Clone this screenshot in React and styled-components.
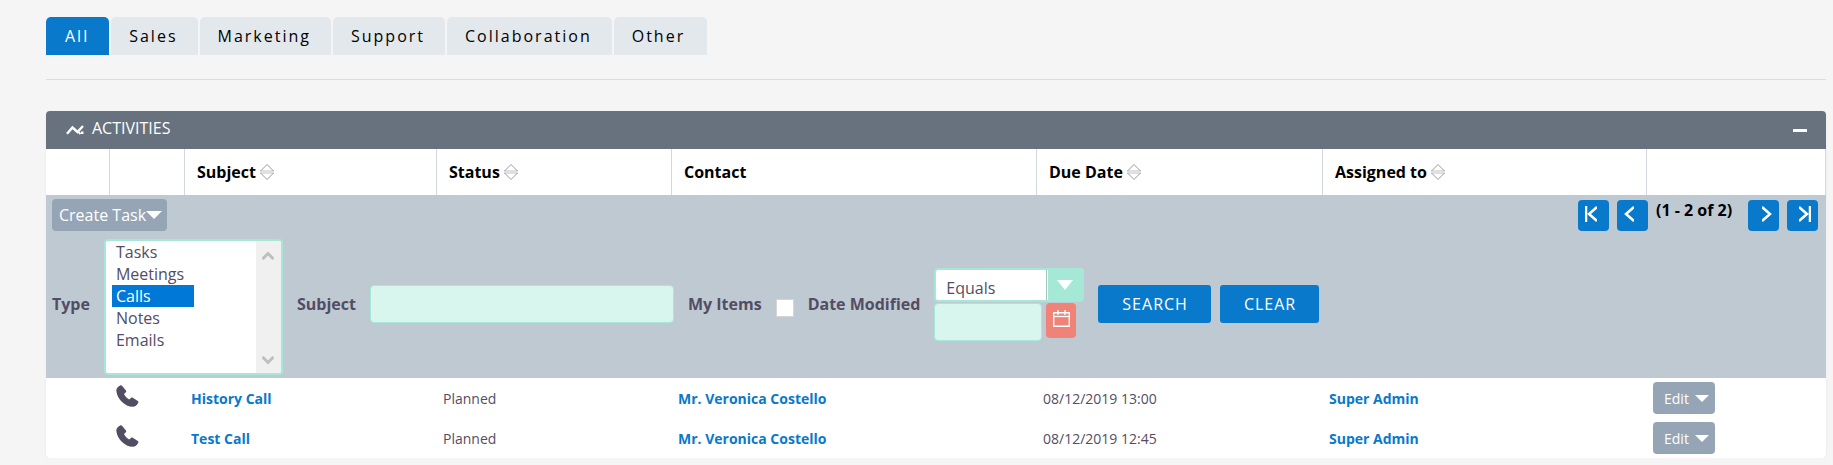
import React, { useState } from "react";
import styled, { createGlobalStyle } from "styled-components";

const GlobalStyle = createGlobalStyle`
  * {
    box-sizing: border-box;
  }
  body {
    margin: 0;
    background-color: #f5f5f5;
    color: #534d64;
    font-family: "Open Sans", sans-serif;
    font-size: 14px;
  }
  button, input, select {
    font-family: inherit;
  }
`;

const Page = styled.div`
  padding: 17px 7px 0 46px;
`;

const Tabs = styled.nav`
  display: flex;
  gap: 2px;
`;

const Tab = styled.button`
  height: 38px;
  padding: 0 20px 0 18px;
  border: none;
  border-radius: 5px 5px 0 0;
  background-color: ${(props) => (props.$active ? "#0879cb" : "#e3e8ec")};
  color: ${(props) => (props.$active ? "white" : "black")};
  font-size: 16px;
  letter-spacing: 2px;
  cursor: pointer;

  &:first-child {
    padding-left: 19px;
  }
  &:last-child {
    padding-right: 22px;
  }
`;

const Divider = styled.hr`
  height: 1px;
  margin: 24px 0 31px;
  border: none;
  background-color: #dddddd;
`;

const Panel = styled.section`
  border-radius: 4px;
  background-color: white;
  box-shadow: 0 1px 2px rgba(0, 0, 0, 0.08);
`;

const PanelHeader = styled.header`
  display: flex;
  align-items: center;
  height: 38px;
  padding: 0 19px 0 20px;
  border-radius: 4px 4px 0 0;
  background-color: #67727e;
  color: white;
`;

const PanelTitle = styled.h2`
  flex: 1;
  margin: 0 0 4px 8px;
  font-size: 16px;
  font-weight: 400;
  line-height: 22px;
`;

const CollapseButton = styled.button`
  display: flex;
  padding: 0;
  border: none;
  background: none;
  color: white;
  cursor: pointer;
`;

const Table = styled.table`
  width: 100%;
  table-layout: fixed;
  border-collapse: separate;
  border-spacing: 0;
`;

const HeadCell = styled.th`
  height: 46px;
  padding: 0 12px;
  border-right: 1px solid #d2d8de;
  color: black;
  font-size: 16px;
  font-weight: 700;
  text-align: left;
  white-space: nowrap;
`;

const HeadLabel = styled.span`
  display: flex;
  align-items: center;
  gap: 4px;
`;

const FilterCell = styled.td`
  padding: 4px 8px 3px 6px;
  background-color: #bfc9d2;
`;

const Toolbar = styled.div`
  display: flex;
  align-items: flex-start;
  justify-content: space-between;
`;

const MenuButton = styled.button`
  display: inline-flex;
  align-items: center;
  height: 32px;
  padding: ${(props) => (props.$small ? "0 6px 0 11px" : "0 5px 0 7px")};
  gap: ${(props) => (props.$small ? "6px" : "0")};
  border: none;
  border-radius: 4px;
  background-color: #95a5b6;
  color: white;
  font-size: ${(props) => (props.$small ? "14px" : "16px")};
  white-space: nowrap;
  cursor: pointer;
`;

const Pagination = styled.div`
  display: flex;
  align-items: flex-start;
  gap: 8px;
  padding-top: 1px;
`;

const PageButton = styled.button`
  display: flex;
  justify-content: ${(props) => (props.$end ? "flex-end" : "flex-start")};
  width: 31px;
  height: 31px;
  padding: 6px 7px 0;
  border: none;
  border-radius: 4px;
  background-color: #0879cb;
  color: white;
  cursor: pointer;
`;

const PageCount = styled.span`
  width: 84px;
  color: black;
  font-size: 16px;
  font-weight: 700;
  line-height: 20px;
  white-space: nowrap;
`;

const Filters = styled.form`
  display: flex;
  align-items: center;
  gap: 14px;
  margin-top: 2px;
`;

const Label = styled.label`
  color: #534d64;
  font-size: 16px;
  font-weight: 700;
  line-height: 22px;
  white-space: nowrap;
`;

const ListBox = styled.div`
  display: flex;
  width: 179px;
  height: 136px;
  margin-top: 6px;
  border: 2px solid #a5e8d6;
  border-radius: 4px;
  background-color: white;
  overflow: hidden;
`;

const TypeSelect = styled.select`
  flex: 1;
  min-width: 0;
  padding: 0 6px;
  border: none;
  outline: none;
  background: none;
  color: #534d64;
  font-size: 16px;
  overflow: hidden;

  option {
    width: 82px;
    height: 22px;
    min-height: 22px;
    padding: 0 4px;
    line-height: 22px;
  }
  option:checked {
    background: linear-gradient(#0078d7, #0078d7);
    -webkit-text-fill-color: white;
  }
`;

const ScrollTrack = styled.div`
  display: flex;
  flex-direction: column;
  align-items: center;
  justify-content: space-between;
  width: 25px;
  padding: 10px 0 8px;
  background-color: #f0f0f0;
  color: #bfbfbf;
`;

const TextInput = styled.input`
  width: ${(props) => props.$width};
  height: 38px;
  padding: 0 10px;
  border: 1px solid #a5e8d6;
  border-radius: 4px;
  background-color: #d8f5ee;
  color: #534d64;
  font-size: 16px;
`;

const Checkbox = styled.input`
  appearance: none;
  width: 18px;
  height: 18px;
  margin: 8px 0 0;
  border: 1px solid #d6d6d6;
  background-color: white;

  &:checked {
    background-color: #0879cb;
  }
`;

const DateFilter = styled.div`
  display: flex;
  flex-direction: column;
  gap: 1px;
`;

const DateRow = styled.div`
  display: flex;
  gap: 4px;
`;

const RangeBox = styled.div`
  display: flex;
  position: relative;
  width: 150px;
  height: 34px;
  border: 2px solid #a5e8d6;
  border-radius: 4px;
  background-color: #a5e8d6;
`;

const RangeSelect = styled.select`
  appearance: none;
  width: 100%;
  padding: 6px 36px 0 10px;
  border: none;
  outline: none;
  border-radius: 2px;
  background: linear-gradient(to right, white 110px, #a9c4bf 110px 111px, white 111px 112px, #a5e8d6 112px);
  color: #534d64;
  font-size: 16px;
`;

const RangeCaret = styled.span`
  display: flex;
  position: absolute;
  top: 10px;
  right: 9px;
  pointer-events: none;
`;

const CalendarButton = styled.button`
  display: flex;
  justify-content: center;
  width: 30px;
  height: 35px;
  padding: 7px 0 0;
  border: none;
  border-radius: 4px;
  background-color: #f08377;
  color: white;
  cursor: pointer;
`;

const Actions = styled.div`
  display: flex;
  gap: 9px;
`;

const ActionButton = styled.button`
  height: 38px;
  padding: 0 23px 0 24px;
  border: none;
  border-radius: 3px;
  background-color: #0879cb;
  color: white;
  font-size: 16px;
  letter-spacing: 1px;
  cursor: pointer;
`;

const Cell = styled.td`
  height: 40px;
  padding: 0 6px;
  font-size: 14px;
  white-space: nowrap;
`;

const IconCell = styled(Cell)`
  padding-bottom: 4px;

  svg {
    display: block;
  }
`;

const RecordLink = styled.a`
  color: #0879cb;
  font-weight: 700;
  text-decoration: none;
`;

const Caret = ({ width, height }) => (
  <svg width={width} height={height} viewBox="0 0 16 8" preserveAspectRatio="none" fill="white">
    <path d="M0 0h16L8 8z" />
  </svg>
);

const ActivityIcon = () => (
  <svg width="18" height="10" viewBox="0 0 18 10" fill="none" stroke="currentColor">
    <path d="M1 8.800L6.500 2.500L11.500 7L17 1" strokeWidth="2.400" />
    <path d="M11.500 6L14.500 9" strokeWidth="2" />
    <rect x="15" y="6.500" width="2.500" height="2.500" fill="currentColor" stroke="none" />
  </svg>
);

const SortIcon = () => (
  <svg width="14" height="16" viewBox="0 0 14 16">
    <rect y="6" width="14" height="4" fill="#e0e0e0" />
    <path d="M.5 7L7 .5L13.500 7M.5 9L7 15.500L13.500 9" fill="none" stroke="#999999" />
  </svg>
);

const PhoneIcon = () => (
  <svg width="23" height="22" viewBox="0 0 23 22" fill="#534d64">
    <path d="M4.500 .3C5 0 5.600 .2 6 .7L9.900 5.400C10.400 6.100 10.300 6.800 9.800 7.300L8 9C9.200 11.400 11 13.300 13.400 14.500L14.900 12.900C15.400 12.400 16.100 12.300 16.700 12.700L21.800 16C22.500 16.500 22.600 17.200 22.200 17.900C20.900 20.200 19.300 21.700 16.700 21.800C9 21.600 1 14 .3 5.700C.1 3.200 2.300 1.400 4.500 .3Z" />
  </svg>
);

const CalendarIcon = () => (
  <svg width="17" height="17" viewBox="0 0 17 17" fill="none" stroke="currentColor">
    <path d="M.75 2.750H16.250V16.250H.75Z" strokeWidth="1.300" />
    <path d="M1 6.500H16" strokeWidth="1.300" />
    <path d="M5 0V5M12 0V5" strokeWidth="1.300" />
  </svg>
);

const Chevron = ({ d, width }) => (
  <svg width={width} height="16" viewBox={`0 0 ${width} 16`} fill="none" stroke="currentColor" strokeWidth="2.500">
    <path d={d} />
  </svg>
);

const ScrollArrow = ({ down }) => (
  <svg width="12" height="9" viewBox="0 0 12 9" fill="none" stroke="currentColor" strokeWidth="3">
    <path d={down ? "M.5 1L6 6.500L11.500 1" : "M.5 8L6 2.500L11.500 8"} />
  </svg>
);

const tabs = ["All", "Sales", "Marketing", "Support", "Collaboration", "Other"];

const columns = [
  { width: 64 },
  { width: 75 },
  { width: 252, label: "Subject", sortable: true },
  { width: 235, label: "Status", sortable: true },
  { width: 365, label: "Contact" },
  { width: 286, label: "Due Date", sortable: true },
  { width: 324, label: "Assigned to", sortable: true },
  { width: 179 },
];

const types = ["Tasks", "Meetings", "Calls", "Notes", "Emails"];

const activities = [
  {
    subject: "History Call",
    status: "Planned",
    contact: "Mr. Veronica Costello",
    due: "08/12/2019 13:00",
    assigned: "Super Admin",
  },
  {
    subject: "Test Call",
    status: "Planned",
    contact: "Mr. Veronica Costello",
    due: "08/12/2019 12:45",
    assigned: "Super Admin",
  },
];

const FilterForm = () => (
  <Filters onSubmit={(event) => event.preventDefault()}>
    <Label htmlFor="type">Type</Label>
    <ListBox>
      <TypeSelect id="type" multiple size={6} defaultValue={["Calls"]}>
        {types.map((type) => (
          <option key={type}>{type}</option>
        ))}
      </TypeSelect>
      <ScrollTrack>
        <ScrollArrow />
        <ScrollArrow down />
      </ScrollTrack>
    </ListBox>
    <Label htmlFor="subject">Subject</Label>
    <TextInput id="subject" type="text" $width="304px" />
    <Label htmlFor="my-items">My Items</Label>
    <Checkbox id="my-items" type="checkbox" />
    <Label htmlFor="date-modified">Date Modified</Label>
    <DateFilter>
      <RangeBox>
        <RangeSelect aria-label="Date range" defaultValue="Equals">
          <option>Equals</option>
        </RangeSelect>
        <RangeCaret>
          <Caret width={16} height={10} />
        </RangeCaret>
      </RangeBox>
      <DateRow>
        <TextInput id="date-modified" type="text" $width="108px" />
        <CalendarButton type="button" aria-label="Pick a date">
          <CalendarIcon />
        </CalendarButton>
      </DateRow>
    </DateFilter>
    <Actions>
      <ActionButton type="submit">SEARCH</ActionButton>
      <ActionButton type="reset">CLEAR</ActionButton>
    </Actions>
  </Filters>
);

const App = () => {
  const [active, setActive] = useState("All");

  return (
    <>
      <GlobalStyle />
      <Page>
        <Tabs>
          {tabs.map((tab) => (
            <Tab key={tab} $active={tab === active} onClick={() => setActive(tab)}>
              {tab}
            </Tab>
          ))}
        </Tabs>
        <Divider />
        <Panel>
          <PanelHeader>
            <ActivityIcon />
            <PanelTitle>ACTIVITIES</PanelTitle>
            <CollapseButton aria-label="Collapse">
              <svg width="14" height="3" fill="currentColor">
                <rect width="14" height="3" />
              </svg>
            </CollapseButton>
          </PanelHeader>
          <Table>
            <colgroup>
              {columns.map((column, index) => (
                <col key={index} width={column.width} />
              ))}
            </colgroup>
            <thead>
              <tr>
                {columns.map((column, index) => (
                  <HeadCell key={index}>
                    <HeadLabel>
                      {column.label}
                      {column.sortable && <SortIcon />}
                    </HeadLabel>
                  </HeadCell>
                ))}
              </tr>
            </thead>
            <tbody>
              <tr>
                <FilterCell colSpan={columns.length}>
                  <Toolbar>
                    <MenuButton>
                      Create Task
                      <Caret width={16} height={8} />
                    </MenuButton>
                    <Pagination>
                      <PageButton aria-label="First page">
                        <Chevron width={12} d="M1 0V16M12 1L4 8L12 15" />
                      </PageButton>
                      <PageButton aria-label="Previous page">
                        <Chevron width={10} d="M10 1L2 8L10 15" />
                      </PageButton>
                      <PageCount>(1 - 2 of 2)</PageCount>
                      <PageButton $end aria-label="Next page">
                        <Chevron width={10} d="M0 1L8 8L0 15" />
                      </PageButton>
                      <PageButton $end aria-label="Last page">
                        <Chevron width={12} d="M11 0V16M0 1L8 8L0 15" />
                      </PageButton>
                    </Pagination>
                  </Toolbar>
                  <FilterForm />
                </FilterCell>
              </tr>
              {activities.map((activity) => (
                <tr key={activity.subject}>
                  <Cell />
                  <IconCell>
                    <PhoneIcon />
                  </IconCell>
                  <Cell>
                    <RecordLink href="#">{activity.subject}</RecordLink>
                  </Cell>
                  <Cell>{activity.status}</Cell>
                  <Cell>
                    <RecordLink href="#">{activity.contact}</RecordLink>
                  </Cell>
                  <Cell>{activity.due}</Cell>
                  <Cell>
                    <RecordLink href="#">{activity.assigned}</RecordLink>
                  </Cell>
                  <Cell>
                    <MenuButton $small>
                      Edit
                      <Caret width={14} height={7} />
                    </MenuButton>
                  </Cell>
                </tr>
              ))}
            </tbody>
          </Table>
        </Panel>
      </Page>
    </>
  );
};

export default App;
